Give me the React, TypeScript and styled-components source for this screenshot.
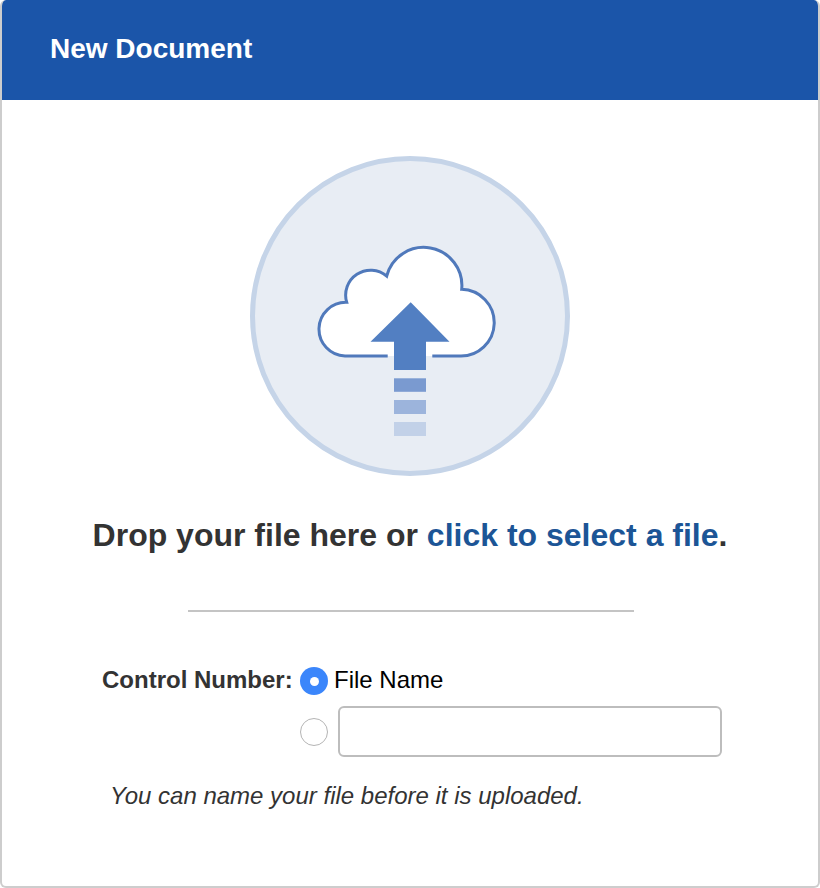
import { FC } from 'react';
import styled, { createGlobalStyle } from 'styled-components';

const GlobalStyle = createGlobalStyle`
  html, body {
    margin: 0;
    padding: 0;
    background: #fff;
  }
  body {
    font-family: "Liberation Sans", Arial, sans-serif;
  }
`;

const Panel = styled.div`
  box-sizing: border-box;
  width: 820px;
  height: 888px;
  border: 2px solid #cdcdcd;
  border-top: 0;
  border-radius: 6px;
  overflow: hidden;
  background: #fff;
`;

const Header = styled.div`
  display: flex;
  align-items: center;
  height: 100px;
  margin: 0 -2px;
  padding: 0 0 2px 50px;
  box-sizing: border-box;
  background: #1b55a9;
  color: #fff;
  font-size: 28px;
  font-weight: bold;
`;

const Dropzone = styled.div`
  display: flex;
  flex-direction: column;
  align-items: center;
  padding-top: 56px;
`;

const UploadCircle = styled.div`
  box-sizing: border-box;
  width: 320px;
  height: 320px;
  border: 5px solid #c5d4e8;
  border-radius: 50%;
  background: #e8edf4;
  svg {
    display: block;
    margin: -5px;
  }
`;

const DropText = styled.p`
  margin: 41px 0 0;
  font-size: 32px;
  line-height: 37px;
  font-weight: bold;
  color: #333;
`;

const SelectLink = styled.a`
  color: #1c5596;
  cursor: pointer;
`;

const Divider = styled.hr`
  box-sizing: border-box;
  width: 446px;
  height: 2px;
  margin: 56px 0 0 2px;
  border: 0;
  background: #c4c4c4;
`;

const Form = styled.div`
  display: grid;
  grid-template-columns: 198px 1fr;
  row-gap: 11px;
  padding: 55px 0 0 100px;
`;

const FieldLabel = styled.label`
  font-size: 24px;
  line-height: 26px;
  font-weight: bold;
  color: #333;
  text-align: right;
  padding-right: 8px;
  white-space: nowrap;
`;

const OptionRow = styled.div`
  display: flex;
  align-items: center;
  grid-column: 2;
`;

const Radio = styled.span<{ $checked?: boolean }>`
  box-sizing: border-box;
  flex: none;
  width: 28px;
  height: 28px;
  border-radius: 50%;
  display: flex;
  align-items: center;
  justify-content: center;
  background: ${(p) => (p.$checked ? '#3b86fb' : '#fff')};
  border: ${(p) => (p.$checked ? '0' : '1.5px solid #b4b4b4')};
  &::after {
    content: '';
    display: ${(p) => (p.$checked ? 'block' : 'none')};
    width: 9px;
    height: 9px;
    border-radius: 50%;
    background: #fff;
  }
`;

const OptionText = styled.span`
  margin-left: 6px;
  padding-bottom: 2px;
  font-size: 24px;
  line-height: 26px;
  color: #000;
`;

const NameInput = styled.input`
  box-sizing: border-box;
  width: 384px;
  height: 51px;
  margin-left: 10px;
  border: 2px solid #bdbdbd;
  border-radius: 6px;
  background: #fff;
  outline: none;
`;

const Note = styled.p`
  margin: 25px 0 0 108px;
  font-size: 24px;
  line-height: 28px;
  font-style: italic;
  color: #333;
`;

const CloudUploadIcon: FC = () => (
  <svg width="320" height="320" viewBox="0 0 320 320" fill="none">
    <path
      d="M137.7 200H95A26.86 26.86 0 0 1 96.7 146.3A25 25 0 0 1 136.7 120A38.2 38.2 0 0 1 211.7 133.3A33.36 33.36 0 1 1 210 200H182.3"
      fill="#fff"
      stroke="#5079bb"
      strokeWidth="3"
    />
    <path d="M160.7 146.3L199.5 185.7H176V214H144V185.7H120.5Z" fill="#527fc2" />
    <rect x="144" y="222.3" width="32" height="13.5" fill="#7a9ad0" />
    <rect x="144" y="244" width="32" height="14" fill="#9cb4dc" />
    <rect x="144" y="266" width="32" height="14" fill="#c2d1e8" />
  </svg>
);

const App: FC = () => (
  <>
    <GlobalStyle />
    <Panel>
      <Header>New Document</Header>
      <Dropzone>
        <UploadCircle>
          <CloudUploadIcon />
        </UploadCircle>
        <DropText>
          Drop your file here or <SelectLink>click to select a file</SelectLink>.
        </DropText>
        <Divider />
      </Dropzone>
      <Form>
        <FieldLabel>Control Number:</FieldLabel>
        <OptionRow>
          <Radio $checked />
          <OptionText>File Name</OptionText>
        </OptionRow>
        <OptionRow>
          <Radio />
          <NameInput type="text" />
        </OptionRow>
      </Form>
      <Note>You can name your file before it is uploaded.</Note>
    </Panel>
  </>
);

export default App;
